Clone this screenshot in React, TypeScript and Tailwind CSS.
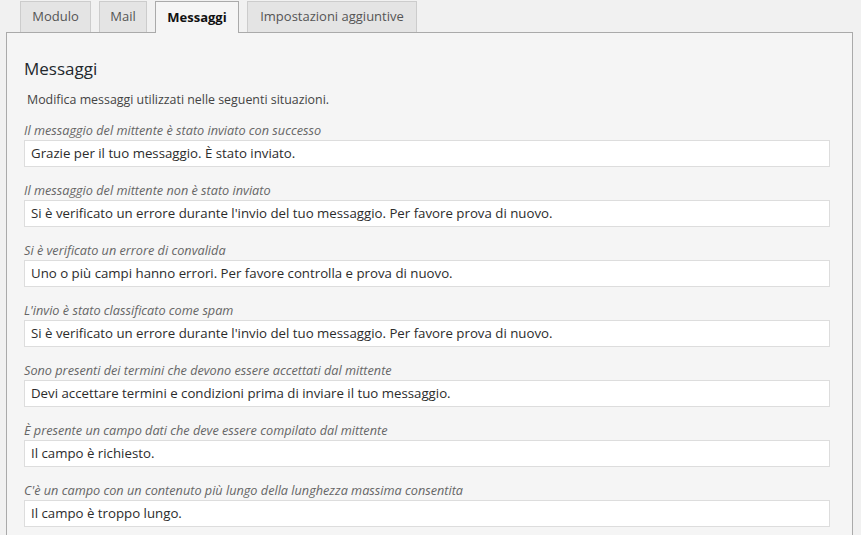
const messages = [
  {
    label: "Il messaggio del mittente è stato inviato con successo",
    value: "Grazie per il tuo messaggio. È stato inviato.",
  },
  {
    label: "Il messaggio del mittente non è stato inviato",
    value: "Si è verificato un errore durante l'invio del tuo messaggio. Per favore prova di nuovo.",
  },
  {
    label: "Si è verificato un errore di convalida",
    value: "Uno o più campi hanno errori. Per favore controlla e prova di nuovo.",
  },
  {
    label: "L'invio è stato classificato come spam",
    value: "Si è verificato un errore durante l'invio del tuo messaggio. Per favore prova di nuovo.",
  },
  {
    label: "Sono presenti dei termini che devono essere accettati dal mittente",
    value: "Devi accettare termini e condizioni prima di inviare il tuo messaggio.",
  },
  {
    label: "È presente un campo dati che deve essere compilato dal mittente",
    value: "Il campo è richiesto.",
  },
  {
    label: "C'è un campo con un contenuto più lungo della lunghezza massima consentita",
    value: "Il campo è troppo lungo.",
  },
];

const tabs = [
  { name: "Modulo", width: "w-[71px]" },
  { name: "Mail", width: "w-[48px]" },
  { name: "Messaggi", width: "w-[84px]" },
  { name: "Impostazioni aggiuntive", width: "w-[170px]" },
];

const App = () => {
  return (
    <div className="h-screen overflow-hidden bg-[#f1f1f1] pl-[6px] pr-[8px] font-['Open_Sans',sans-serif] text-[#32373c]">
      {/* TABS */}
      <div className="flex gap-[8px] pl-[14px] pt-[1px]">
        {tabs.map((tab) => (
          <div
            key={tab.name}
            className={
              tab.name === "Messaggi"
                ? `relative -mb-px flex h-[32px] items-center justify-center border border-b-0 border-[#aaaaaa] bg-[#f5f5f5] text-[13px] font-bold text-[#111] ${tab.width}`
                : `flex h-[31px] items-center justify-center border border-b-0 border-[#cccccc] bg-[#e4e4e4] text-[13px] text-[#555] ${tab.width}`
            }
          >
            {tab.name}
          </div>
        ))}
      </div>

      {/* PANEL */}
      <div className="border border-[#aaaaaa] bg-[#f5f5f5] pl-[17px] pr-[22px] pt-[24px] pb-10">
        <h2 className="text-[17px] leading-[24px] text-[#23282d]">Messaggi</h2>
        <p className="mt-[10px] pl-[3px] text-[12.4px] leading-[18px] text-[#444]">
          Modifica messaggi utilizzati nelle seguenti situazioni.
        </p>
        <div className="mt-[13px] flex flex-col gap-[15px]">
          {messages.map((m, i) => (
            <div key={i}>
              <div className="text-[12.7px] italic leading-[16px] text-[#666]">{m.label}</div>
              <div className="mt-[2px] flex h-[27px] items-center border border-[#dddddd] bg-white px-[6px] text-[13.25px] text-[#2c2c2c]">
                {m.value}
              </div>
            </div>
          ))}
        </div>
      </div>
    </div>
  );
};

export default App;
